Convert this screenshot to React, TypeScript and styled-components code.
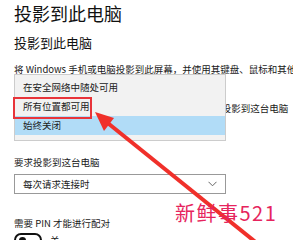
import React from 'react';
import styled, { createGlobalStyle } from 'styled-components';

const GlobalStyle = createGlobalStyle`
  html, body {
    margin: 0;
    padding: 0;
    background: #ffffff;
    overflow: hidden;
  }
`;

const StyledPage = styled.div`
  position: relative;
  width: 293px;
  height: 240px;
  overflow: hidden;
  padding-left: 14px;
  box-sizing: border-box;
  font-family: 'Noto Sans CJK SC', 'Noto Sans', sans-serif;
  color: #111;
  white-space: nowrap;
`;
const StyledTitle = styled.h1`
  margin: 0;
  font-size: 18px;
  font-weight: 400;
  line-height: 26px;
`;
const StyledSubtitle = styled.h2`
  margin: 8px 0 0;
  font-size: 13px;
  font-weight: 400;
  line-height: 18px;
`;
const StyledText = styled.p<{ $gap: number }>`
  margin: ${(p) => p.$gap}px 0 0;
  font-size: 9.5px;
  line-height: 14px;
  color: #1a1a1a;
`;
const StyledSetting = styled.div`
  position: relative;
`;
const StyledCombo = styled.div<{ $gap: number }>`
  display: flex;
  align-items: center;
  justify-content: space-between;
  width: 212px;
  height: 20px;
  margin-top: ${(p) => p.$gap}px;
  padding: 0 8px;
  box-sizing: border-box;
  border: 1px solid #999;
  background: #fff;
  font-size: 9.5px;
  color: #1a1a1a;
`;
const StyledChevron = styled.svg`
  width: 9px;
  height: 6px;
`;
const StyledPopup = styled.ul`
  position: absolute;
  left: 0;
  top: -45px;
  width: 212px;
  margin: 0;
  padding: 3px 0 5px;
  box-sizing: border-box;
  list-style: none;
  background: #f2f2f2;
  border: 1px solid #cccccc;
`;
const StyledOption = styled.li<{ $active?: boolean }>`
  height: 19px;
  line-height: 19px;
  padding-left: 8px;
  font-size: 9.5px;
  color: #1a1a1a;
  background: ${(p) => (p.$active ? '#b1dcf7' : 'transparent')};
`;
const StyledToggleRow = styled.div`
  display: flex;
  align-items: center;
  gap: 8px;
  margin-top: 3px;
  font-size: 9.5px;
`;
const StyledToggle = styled.div`
  display: flex;
  align-items: center;
  width: 28px;
  height: 14px;
  padding: 0 3px;
  box-sizing: border-box;
  border: 2px solid #111;
  border-radius: 8px;
`;
const StyledKnob = styled.span`
  width: 7px;
  height: 7px;
  border-radius: 50%;
  background: #111;
`;
const StyledHighlight = styled.div`
  position: absolute;
  left: 13px;
  top: 97px;
  width: 79px;
  height: 22px;
  box-sizing: border-box;
  border: 2px solid #e8343a;
`;
const StyledArrow = styled.svg`
  position: absolute;
  left: 0;
  top: 0;
  width: 293px;
  height: 240px;
  pointer-events: none;
`;
const StyledWatermark = styled.div`
  position: absolute;
  left: 175px;
  top: 199px;
  font-size: 20px;
  line-height: 28px;
  letter-spacing: 1.5px;
  color: #e6245d;
  font-family: 'Noto Sans CJK SC', 'Liberation Sans', sans-serif;
`;

const App = () => {
  return (
    <>
      <GlobalStyle />
      <StyledPage>
        <StyledTitle>投影到此电脑</StyledTitle>
        <StyledSubtitle>投影到此电脑</StyledSubtitle>
        <StyledText $gap={10}>
          将 Windows 手机或电脑投影到此屏幕，并使用其键盘、鼠标和其他设备。
        </StyledText>
        <StyledText $gap={25}>
          当你同意时，某些 Windows 和 Android 设备可以投影到这台电脑
        </StyledText>
        <StyledSetting>
          <StyledCombo $gap={4}>始终关闭</StyledCombo>
          <StyledPopup>
            <StyledOption>在安全网络中随处可用</StyledOption>
            <StyledOption>所有位置都可用</StyledOption>
            <StyledOption $active>始终关闭</StyledOption>
          </StyledPopup>
        </StyledSetting>
        <StyledText $gap={16}>要求投影到这台电脑</StyledText>
        <StyledCombo $gap={5}>
          每次请求连接时
          <StyledChevron viewBox="0 0 9 6">
            <path d="M0.5 0.8 L4.5 4.8 L8.5 0.8" fill="none" stroke="#666" strokeWidth="1" />
          </StyledChevron>
        </StyledCombo>
        <StyledText $gap={22}>需要 PIN 才能进行配对</StyledText>
        <StyledToggleRow>
          <StyledToggle>
            <StyledKnob />
          </StyledToggle>
          关
        </StyledToggleRow>

        <StyledHighlight />
        <StyledArrow viewBox="0 0 293 240">
          <line x1="104" y1="120" x2="258" y2="244" stroke="#f0302a" strokeWidth="4" />
          <polygon points="95,112 114,118 104,131" fill="#f0302a" />
        </StyledArrow>
        <StyledWatermark>新鲜事521</StyledWatermark>
      </StyledPage>
    </>
  );
};

export default App;
